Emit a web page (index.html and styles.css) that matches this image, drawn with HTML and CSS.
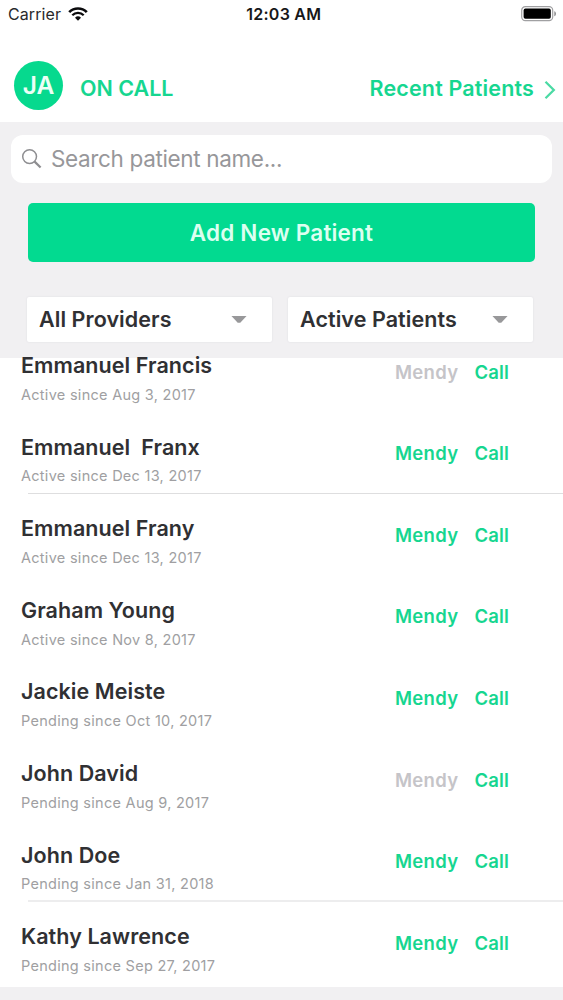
FILE: index.html
```html
<!DOCTYPE html>
<html lang="en">
<head>
<meta charset="utf-8">
<title>Patients</title>
<link rel="stylesheet" href="styles.css">
</head>
<body>
<div class="screen">
  <div class="status">
    <div class="status-left"><span class="carrier">Carrier</span>
      <svg class="wifi" width="20" height="14" viewBox="0 0 20 14" fill="none" stroke="#0b0b0d"><path d="M1.2 5.1a12.6 12.6 0 0 1 17.6 0" stroke-width="2.7"/><path d="M4.3 8.3a8.1 8.1 0 0 1 11.4 0" stroke-width="2.3"/><path d="M10 13.7 7 10.7a4.3 4.3 0 0 1 6 0z" fill="#0b0b0d" stroke="none"/></svg>
    </div>
    <div class="clock">12:03 AM</div>
    <svg class="battery" width="36" height="16" viewBox="0 0 36 16"><rect x=".7" y=".7" width="31" height="14" rx="3.6" fill="#fff" stroke="#a0a0a2" stroke-width="1.2"/><rect x="2.6" y="2.6" width="27.2" height="10.2" rx="1.8" fill="#000"/><path d="M33.3 5.2c2.2.6 2.2 4.4 0 5z" fill="#8b8b8d"/></svg>
  </div>
  <header class="header">
    <div class="avatar">JA</div>
    <div class="oncall">ON CALL</div>
    <a class="recent">Recent Patients</a>
    <svg class="chevron" width="12" height="20" viewBox="0 0 12 20" fill="none" stroke="#4bdaa4" stroke-width="2.3"><path d="m1.5 1.8 8.3 8.2-8.3 8.2"/></svg>
  </header>
  <section class="controls">
    <div class="search">
      <svg width="22" height="22" viewBox="0 0 22 22" fill="none" stroke="#8e8e91"><circle cx="8.6" cy="8.6" r="6.9" stroke-width="1.5"/><path d="m13.6 13.6 6 5.9" stroke-width="2.2"/></svg>
      <span class="placeholder">Search patient name...</span>
    </div>
    <button class="add"><span>Add New Patient</span></button>
    <div class="filters">
      <div class="select"><span class="providers">All Providers</span><i class="caret"></i></div>
      <div class="select"><span class="active">Active Patients</span><i class="caret"></i></div>
    </div>
  </section>
  <main class="list">
    <div class="row"><div class="who"><div class="name">Emmanuel Francis</div><div class="since">Active since Aug 3, 2017</div></div><span class="mendy off">Mendy</span><span class="call">Call</span></div>
    <div class="row line"><div class="who"><div class="name">Emmanuel&nbsp; Franx</div><div class="since">Active since Dec 13, 2017</div></div><span class="mendy">Mendy</span><span class="call">Call</span></div>
    <div class="row"><div class="who"><div class="name">Emmanuel Frany</div><div class="since">Active since Dec 13, 2017</div></div><span class="mendy">Mendy</span><span class="call">Call</span></div>
    <div class="row"><div class="who"><div class="name">Graham Young</div><div class="since">Active since Nov 8, 2017</div></div><span class="mendy">Mendy</span><span class="call">Call</span></div>
    <div class="row"><div class="who"><div class="name">Jackie Meiste</div><div class="since">Pending since Oct 10, 2017</div></div><span class="mendy">Mendy</span><span class="call">Call</span></div>
    <div class="row"><div class="who"><div class="name">John David</div><div class="since">Pending since Aug 9, 2017</div></div><span class="mendy off">Mendy</span><span class="call">Call</span></div>
    <div class="row line soft"><div class="who"><div class="name">John Doe</div><div class="since">Pending since Jan 31, 2018</div></div><span class="mendy">Mendy</span><span class="call">Call</span></div>
    <div class="row"><div class="who"><div class="name">Kathy Lawrence</div><div class="since">Pending since Sep 27, 2017</div></div><span class="mendy">Mendy</span><span class="call">Call</span></div>
  </main>
</div>
</body>
</html>
```
FILE: styles.css
```css
* { box-sizing: border-box; }
body { margin: 0; background: #f1f0f2; font-family: Inter, sans-serif; }
.screen { width: 563px; height: 1000px; overflow: hidden; display: flex; flex-direction: column; white-space: nowrap; }
.status { height: 28px; background: #fff; display: grid; grid-template-columns: 1fr auto 1fr; align-items: center; padding: 0 6px 0 8px; color: #29292b; }
.status-left { display: flex; align-items: center; gap: 7px; }
.carrier { font-size: 16px; letter-spacing: 0.1px; }
.clock { font-size: 16px; font-weight: 600; letter-spacing: 0.25px; color: #171719; padding-left: 2.5px; }
.battery { justify-self: end; }
.header { height: 94px; background: #fff; display: flex; align-items: center; padding: 21px 7px 0 14px; font-size: 21.5px; font-weight: 600; color: #16d690; }
.avatar { width: 49px; height: 49px; border-radius: 50%; background: #06d98e; color: #ecfff7; font-size: 24.5px; line-height: 49px; text-align: center; }
.oncall { margin: 5px 0 0 17px; }
.recent { margin: 5px 0 0 auto; letter-spacing: 0.15px; }
.chevron { margin: 9px 0 0 10px; }
.controls { height: 236px; background: #f1f0f2; padding: 13px 11px 0; flex: none; }
.search { height: 48px; border-radius: 12px; background: #fff; display: flex; align-items: center; padding-left: 10px; gap: 8px; }
.placeholder { margin-top: -2px; font-size: 22.5px; color: #97979a; letter-spacing: -0.35px; }
.add { display: block; width: 507px; height: 59px; margin: 20px 0 0 17px; padding: 0; border: 0; border-radius: 5px; background: #02da90; color: #dcfff0; font: 600 22.5px Inter, sans-serif; letter-spacing: 0.2px; }
.filters { display: flex; gap: 16px; margin: 35px 0 0 16px; }
.select { width: 245px; height: 45px; background: #fff; border-radius: 2px; box-shadow: 0 0 2px #dedde0; display: flex; align-items: center; justify-content: space-between; padding: 0 25px 2px 12px; font-size: 21.5px; font-weight: 600; letter-spacing: 0.07px; color: #303033; }
.caret { width: 16px; height: 8px; margin-top: 2px; background: #98989a; clip-path: polygon(0 0, 100% 0, 58% 92%, 42% 92%); }
.list { height: 629px; flex: none; background: #fff; display: flow-root; }
.row { height: 81.57px; display: flex; align-items: flex-start; padding: 19px 53px 0 21px; }
.row:first-child { margin-top: -26.8px; }
.line { background: linear-gradient(#dededf, #dededf) 28px 100% / 100% 1px no-repeat; }
.soft { background: linear-gradient(#ededee, #ededee) 28px 100% / 100% 2px no-repeat; }
.who { flex: 1; }
.name { height: 30px; line-height: 30px; font-size: 21.5px; font-weight: 600; color: #303033; letter-spacing: 0.07px; }
.since { height: 20px; line-height: 20px; margin-top: 4.7px; font-size: 14.5px; color: #a09fa2; letter-spacing: 0.28px; }
.mendy, .call { margin-top: 8.6px; line-height: 26px; font-size: 18.5px; font-weight: 600; color: #16d690; }
.mendy { width: 79.5px; letter-spacing: 0.3px; }
.call { width: 35.5px; letter-spacing: 0.15px; }
.off { color: #c5c4c8; }
```
